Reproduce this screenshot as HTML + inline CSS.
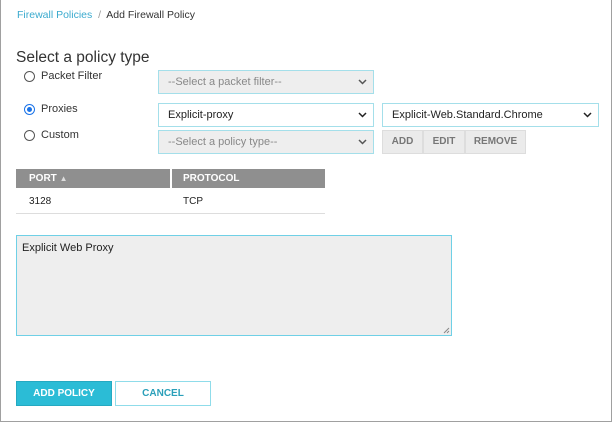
<!DOCTYPE html>
<html><head><style>
*{box-sizing:border-box;margin:0;padding:0}
body{width:613px;height:422px;background:#fff;font-family:"Liberation Sans",sans-serif;position:relative;overflow:hidden}
.frame{position:absolute;left:0;top:0;width:612px;height:422px;border:1px solid #a0a0a0;border-top:none}
.a{position:absolute}
.sel{position:absolute;height:24px;border:1px solid #a4dfea;font-size:11px;color:#888;padding-left:9px;line-height:22px;background:#eee}
.sel.w{background:#fff;color:#222}
.sel svg{position:absolute;right:6px;top:8px}
.rad{position:absolute;width:11px;height:11px;border:1px solid #555;border-radius:50%;background:#fff}
.lbl{position:absolute;font-size:11px;color:#333}
.btn{position:absolute;top:130px;height:24px;background:#ebebeb;border:1px solid #ddd;font-size:10px;font-weight:bold;color:#777;text-align:center;line-height:22px}
</style></head><body>
<div class="frame"></div>
<div class="a" style="left:17px;top:9px;font-size:10.5px;color:#3aaace">Firewall Policies&nbsp; <span style="color:#999">/</span>&nbsp; <span style="color:#333">Add Firewall Policy</span></div>
<div class="a" style="left:16px;top:49px;font-size:15.5px;color:#333">Select a policy type</div>

<div class="rad" style="left:24px;top:71px"></div><div class="lbl" style="left:41px;top:70px">Packet Filter</div>
<div class="rad" style="left:24px;top:104px;border-color:#1a73e8"><div style="position:absolute;left:2px;top:2px;width:5px;height:5px;border-radius:50%;background:#1a73e8"></div></div><div class="lbl" style="left:41px;top:103px">Proxies</div>
<div class="rad" style="left:24px;top:130px"></div><div class="lbl" style="left:41px;top:129px">Custom</div>

<div class="sel" style="left:158px;top:70px;width:216px">--Select a packet filter--<svg width="9" height="6"><path d="M1 1l3.5 3.5L8 1" stroke="#555" stroke-width="1.5" fill="none"/></svg></div>
<div class="sel w" style="left:158px;top:103px;width:216px">Explicit-proxy<svg width="9" height="6"><path d="M1 1l3.5 3.5L8 1" stroke="#222" stroke-width="1.5" fill="none"/></svg></div>
<div class="sel" style="left:158px;top:130px;width:216px">--Select a policy type--<svg width="9" height="6"><path d="M1 1l3.5 3.5L8 1" stroke="#555" stroke-width="1.5" fill="none"/></svg></div>
<div class="sel w" style="left:382px;top:103px;width:217px">Explicit-Web.Standard.Chrome<svg width="9" height="6"><path d="M1 1l3.5 3.5L8 1" stroke="#222" stroke-width="1.5" fill="none"/></svg></div>

<div class="btn" style="left:382px;width:41px">ADD</div>
<div class="btn" style="left:423px;width:42px">EDIT</div>
<div class="btn" style="left:465px;width:61px">REMOVE</div>

<div class="a" style="left:16px;top:169px;width:309px;height:19px;background:#8f8f8f"></div>
<div class="a" style="left:170px;top:169px;width:2px;height:19px;background:#fff"></div>
<div class="a" style="left:29px;top:173px;font-size:10px;font-weight:bold;color:#fff">PORT <span style="font-size:8px;color:#ddd">&#9650;</span></div>
<div class="a" style="left:183px;top:173px;font-size:10px;font-weight:bold;color:#fff">PROTOCOL</div>
<div class="a" style="left:29px;top:196px;font-size:10px;color:#222">3128</div>
<div class="a" style="left:183px;top:196px;font-size:10px;color:#222">TCP</div>
<div class="a" style="left:16px;top:213px;width:309px;height:1px;background:#ddd"></div>

<div class="a" style="left:16px;top:235px;width:436px;height:101px;background:#eee;border:1px solid #6fd0e6;padding:6px 5px;font-size:11px;color:#222">Explicit Web Proxy<svg class="a" style="right:1px;bottom:1px" width="7" height="7"><path d="M1 6L6 1M4 6L6 4" stroke="#888" stroke-width="1"/></svg></div>

<div class="a" style="left:16px;top:381px;width:96px;height:25px;background:#2bbcd6;border:1px solid #25a9c1;color:#fff;font-size:10px;font-weight:bold;text-align:center;line-height:23px">ADD POLICY</div>
<div class="a" style="left:115px;top:381px;width:96px;height:25px;background:#fff;border:1px solid #8fdcea;color:#2a9fb9;font-size:10px;font-weight:bold;text-align:center;line-height:23px">CANCEL</div>
</body></html>
